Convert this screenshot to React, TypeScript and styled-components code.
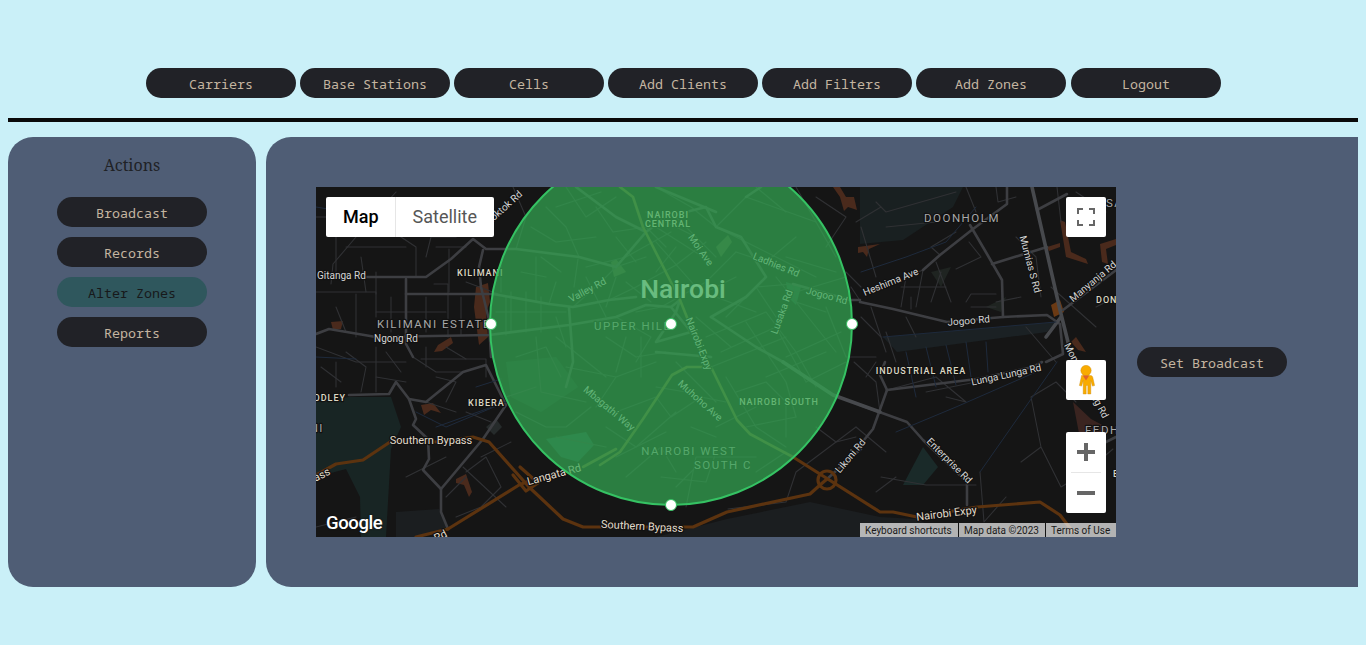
import React from "react";
import styled, { createGlobalStyle } from "styled-components";

const Global = createGlobalStyle`
  html, body { background: #caf0f8; }
  body { margin: 8px; font-family: "Noto Sans Mono", "DejaVu Sans Mono", monospace; }
`;

const Nav = styled.nav`
  display: flex;
  justify-content: center;
  gap: 4px;
  padding: 60px 0 0 1px;
  & > button:last-child { margin-left: 1px; }
`;

const Pill = styled.button<{ $active?: boolean }>`
  width: 150px;
  height: 30px;
  flex: none;
  border: none;
  border-radius: 15px;
  padding: 2px 0 0;
  background: ${(p) => (p.$active ? "#2f575d" : "#212227")};
  color: ${(p) => (p.$active ? "#17191b" : "#c4b5a0")};
  font: 13.33px "Noto Sans Mono", "DejaVu Sans Mono", monospace;
  text-align: center;
`;

const Rule = styled.hr`
  height: 4px;
  margin: 20px 0 15px;
  border: none;
  background: #0a0a0a;
`;

const Panels = styled.main`
  display: flex;
  gap: 10px;
  height: 450px;
`;

const Sidebar = styled.aside`
  width: 248px;
  flex: none;
  display: flex;
  flex-direction: column;
  align-items: center;
  gap: 10px;
  background: #4f5d75;
  border-radius: 25px;
`;

const SideTitle = styled.h2`
  margin: 18px 0 11px;
  height: 21px;
  font: 400 16px/21px "Noto Serif", "DejaVu Serif", serif;
  color: #1f2226;
`;

const Content = styled.section`
  flex: 1;
  display: flex;
  align-items: center;
  gap: 21px;
  padding-left: 50px;
  background: #4f5d75;
  border-radius: 25px 0 0 25px;
`;

const MapFrame = styled.div`
  position: relative;
  width: 800px;
  height: 350px;
  flex: none;
  overflow: hidden;
  background: #151515;
`;

const MapArt = styled.svg`
  display: block;
  width: 800px;
  height: 350px;
`;

const Road = styled.path<{ $c: string; $w: number }>`
  fill: none;
  stroke: ${(p) => p.$c};
  stroke-width: ${(p) => p.$w};
  stroke-linejoin: round;
  stroke-linecap: round;
`;

const Patch = styled.path<{ $c: string }>`
  fill: ${(p) => p.$c};
`;

type Kind = "road" | "major" | "area" | "poi" | "city";

const KIND_CSS: Record<Kind, string> = {
  road: "font-size: 10px; fill: #d4d4d4;",
  major: "font-size: 11px; fill: #e2dccb;",
  area: "font-size: 11.5px; letter-spacing: 1.5px; fill: #a8a8a8;",
  poi: "font-size: 9px; font-weight: 500; letter-spacing: 1px; fill: #dcd8c4;",
  city: "font-size: 26.5px; font-weight: 500; fill: #f0f0f0;",
};

const Label = styled.text<{ $kind: Kind }>`
  font-family: Roboto, "Liberation Sans", sans-serif;
  paint-order: stroke;
  stroke: #111;
  stroke-width: 2.4px;
  stroke-linejoin: round;
  ${(p) => KIND_CSS[p.$kind]}
`;

const Zone = styled.circle`
  fill: #34a853;
  fill-opacity: 0.72;
  stroke: #35c263;
  stroke-width: 2;
`;

const Handle = styled.circle`
  fill: #fff;
  stroke: #35c263;
  stroke-width: 1;
`;

const MapTypes = styled.div`
  position: absolute;
  left: 10px;
  top: 10px;
  display: flex;
  height: 40px;
  background: #fff;
  border-radius: 2px;
  font: 18px/40px Roboto, sans-serif;
`;

const MapType = styled.div<{ $on?: boolean }>`
  padding: ${(p) => (p.$on ? "0 16px 0 17px" : "0 16.5px 0 17px")};
  color: ${(p) => (p.$on ? "#000" : "#565656")};
  font-weight: ${(p) => (p.$on ? 500 : 400)};
  & + & { border-left: 1px solid #e6e6e6; }
`;

const Ctl = styled.div<{ $top: number }>`
  position: absolute;
  right: 10px;
  top: ${(p) => p.$top}px;
  width: 40px;
  display: flex;
  flex-direction: column;
  align-items: center;
  justify-content: center;
  background: #fff;
  border-radius: 2px;
`;

const ZoomCell = styled.div`
  width: 40px;
  height: 40px;
  display: flex;
  align-items: center;
  justify-content: center;
`;

const ZoomSep = styled.div`
  width: 30px;
  height: 1px;
  background: #e6e6e6;
`;

const GoogleMark = styled.div`
  position: absolute;
  left: 10px;
  bottom: 2px;
  font: 500 18.5px/24px Roboto, "Open Sans", sans-serif;
  letter-spacing: -0.4px;
  color: #fff;
  text-shadow: 0 0 2px #111;
`;

const Attribution = styled.div`
  position: absolute;
  right: 0;
  bottom: 0;
  display: flex;
  height: 14px;
  font: 10px/15px Roboto, sans-serif;
  color: #1a1a1a;
`;

const AttrItem = styled.span<{ $w: number }>`
  width: ${(p) => p.$w}px;
  padding-left: 5px;
  box-sizing: border-box;
  background: rgba(255, 255, 255, 0.68);
  & + & { margin-left: 1px; }
`;

const ROADS = {
  minor: [
    "M15 97L17 77L40 50L80 5", "M0 30H20V90", "M0 105H60V130", "M90 107V92M118 97H132V150M40 107V150M60 85V107",
    "M133 62V105M110 70L115 50L140 50M120 60H150M0 160L40 175H90M20 175V200M60 160V205M105 172H170V190",
    "M145 110V148M185 75V105M150 95L190 110V148M195 105V145M210 105V145M225 110V145M180 125H250",
    "M97 170L120 185L147 185M60 190L90 195M110 215L140 225M150 225L175 235",
    "M197 0L210 30L200 62M230 20L250 40L263 70M250 0L270 30L300 10M280 20L297 45L330 40L350 60M262 72L258 100M300 50L320 75",
    "M233 117L240 95M205 85L230 90M220 70V115M257 120L285 95L300 80L330 70M293 113L320 100L360 78L390 55",
    "M340 0L375 20L400 40L430 10M400 40L440 60L500 90M430 10L500 35M420 65L450 75L480 50",
    "M355 45L310 70L270 80M340 55L380 100M360 30L400 70M330 25L380 50M340 40L395 75",
    "M420 65L390 95L345 120L320 125M440 100L477 97L480 115L510 125M460 90L500 140L520 165",
    "M390 150L450 125L480 165L500 200M405 165L460 140L490 195M395 180L470 150M430 135L470 195L480 230",
    "M450 190L510 165M470 170L525 145M490 195L530 175M535 100L545 115M470 70L520 85M480 105L530 90",
    "M410 190L440 240L470 260M420 205L450 195L470 215V250M430 240L480 230M470 265L440 285M440 270H380L370 320",
    "M300 225L340 210L355 230L385 210L410 215M290 240L320 260L360 225M280 220L300 190L340 175",
    "M240 150L290 190M220 150L225 205L270 215M250 180L300 190M290 150L320 170L350 165M325 150V190M310 150L300 185",
    "M200 225L230 240L250 240L275 220M220 200L190 210M240 250L290 260M300 270L350 245M345 290L390 295L400 265M360 300L380 280",
    "M510 120L530 170L560 170M538 175L560 195L564 225M570 145L580 175M555 120L570 165",
    "M607 83L590 90L585 120M620 75L635 115M607 83L600 120M585 100H630M595 110V122M615 115L625 85M624 68L615 60L640 45M653 55L665 70L640 82",
    "M650 115L655 107H680M655 120H680M700 50L720 70L725 110M680 115L705 110",
    "M560 15L570 25L640 5M570 40L620 35M650 0L660 25M680 0L682 15L700 10",
    "M741 0L745 35M735 100L780 140M710 140L740 175M780 120L800 110M760 5L790 25",
    "M571 203L620 190L650 215L630 210M610 205L660 195M550 190L560 175",
    "M664 285L668 335L690 310M705 275L725 260L745 300M725 260L715 210L740 195L760 215M745 300L770 285L797 262",
    "M565 290L610 298L660 298M560 305L580 290M500 240L520 255L540 250M540 240L570 265",
    "M412 322L470 315L480 285L500 270L540 240",
    "M147 280L190 320M90 290L130 270M165 270L195 255M150 285L170 270L185 300L165 320L140 330",
    "M0 340L40 330M130 310L150 290",
    "M30 60H90M45 70L50 105M70 40L100 60V90M100 30L130 45M110 110V145M75 110V145M60 125H130M20 120L30 145",
    "M30 165L50 180L45 205M70 165L85 185M110 160V180M130 160L150 172M5 180L25 195M120 190L140 195L130 215",
    "M240 20L285 5M215 40L240 55L280 50M225 70L245 85M270 90L290 130M240 130L250 160M200 170L230 160L245 190",
    "M300 130L335 150L320 175M290 120L300 90M310 95L335 115M340 85L360 60M380 110L420 90M400 110L440 125",
    "M360 175L400 215M340 200L370 205M310 290L345 260L360 285M400 240L440 220M375 240L400 250",
    "M410 130L440 100L460 130M380 130L415 160M440 0L470 25M500 10L530 30L510 60M480 0L520 70",
    "M540 35L565 20M545 40L560 90M530 85L545 100M545 130L565 150M590 130L600 150",
  ],
  main: [
    "M50 90H110L135 72L157 52L170 62H200L263 70L300 80",
    "M167 63L163 80L165 100L173 133L175 170",
    "M0 147L13 142L60 150L173 148L253 138L300 130L330 118L355 120L364 113",
    "M90 92V157L97 170", "M90 107H177L233 117L257 120L293 113L320 110",
    "M253 120L257 175L250 200",
    "M33 208L73 207L80 195L93 212L110 215L147 185L170 178L187 212L190 218L167 252L125 302V325L132 342",
    "M93 212L100 232L97 238L112 252L113 272L107 283L125 302",
    "M300 80L330 45L350 30L390 20L400 40L425 50L450 90L430 110L395 130",
    "M260 0L300 30L330 45M340 0L400 25M430 10L445 0",
    "M364 113L360 125M355 120L375 145L340 155L360 125M395 130L440 160L467 175",
    "M477 97L534 113",
    "M340 165L395 170",
    "M544 115L577 122L631 135L687 130L731 128L744 137L747 167L730 175",
    "M534 113H544",
    "M607 83L624 68L657 42L691 17V0",
    "M654 38L671 67L686 93L687 130", "M676 77L731 60",
    "M747 123L804 80", "M721 23L751 7",
    "M571 203L661 192", "M661 192L717 180L726 175",
    "M571 203L564 188L569 175", "M571 203L557 242L544 258",
    "M544 218L591 235L607 253L651 295V318",
    "M511 292L530 275L545 262",
    "M760 270L800 250",
  ],
  wide: [
    "M716 0L744 123L757 175", "M467 175L517 208L564 225", "M730 150L745 130",
  ],
  olive: [
    "M304 0L317 10L327 40L364 113L387 170L396 182L421 233L434 247L477 270",
    "M284 278L304 265L327 232L356 188L371 180L394 180",
    "M267 280L300 262",
  ],
  brown: [
    "M0 288L20 277L47 273L77 253L123 255L157 250L173 255L197 282L213 300L247 332L267 340L300 340L377 340L411 325L494 307L504 298L511 292",
    "M132 342L203 298L213 294", "M477 270L564 325L577 325L601 330L661 320L724 315L744 328L757 345",
    "M197 288L210 304L222 296L204 280",
    "M502 293A9 9 0 1 0 520 293A9 9 0 1 0 502 293",
    "M100 350L132 342",
  ],
  blue: [
    "M664 285L741 175", "M0 170L40 172", "M160 200L185 192", "M120 240L190 215", "M580 245L640 220L720 185",
    "M567 150L740 135", "M590 165L600 210M610 160L620 200M630 158L640 198M650 155L655 190M670 155L672 185",
    "M100 225L130 240L190 215", "M0 20L30 25", "M545 85L590 70L630 55L660 20",
  ],
};

const LABELS: { t: string; x: number; y: number; k: Kind; r?: number; a?: string }[] = [
  { t: "Gitanga Rd", x: 1, y: 92, k: "road" },
  { t: "Oloitoktok Rd", x: 207, y: 8, k: "road", r: -42, a: "end" },
  { t: "KILIMANI", x: 141, y: 89, k: "poi" },
  { t: "KILIMANI ESTATE", x: 61, y: 141, k: "area" },
  { t: "Ngong Rd", x: 58, y: 155, k: "road" },
  { t: "Valley Rd", x: 273, y: 106, k: "road", r: -28, a: "middle" },
  { t: "UPPER HILL", x: 278, y: 143, k: "area" },
  { t: "NAIROBI", x: 352, y: 31, k: "poi", a: "middle" },
  { t: "CENTRAL", x: 352, y: 40, k: "poi", a: "middle" },
  { t: "Moi Ave", x: 382, y: 65, k: "road", r: 55, a: "middle" },
  { t: "Ladhies Rd", x: 459, y: 81, k: "road", r: 22, a: "middle" },
  { t: "Jogoo Rd", x: 510, y: 112, k: "road", r: 15, a: "middle" },
  { t: "Lusaka Rd", x: 469, y: 126, k: "road", r: -70, a: "middle" },
  { t: "Nairobi", x: 367, y: 111, k: "city", a: "middle" },
  { t: "Nairobi Expy", x: 380, y: 158, k: "road", r: 68, a: "middle" },
  { t: "Muhoho Ave", x: 382, y: 216, k: "road", r: 42, a: "middle" },
  { t: "Mbagathi Way", x: 291, y: 224, k: "road", r: 40, a: "middle" },
  { t: "NAIROBI SOUTH", x: 463, y: 218, k: "poi", a: "middle" },
  { t: "NAIROBI WEST", x: 373, y: 268, k: "area", a: "middle" },
  { t: "SOUTH C", x: 407, y: 282, k: "area", a: "middle" },
  { t: "Southern Bypass", x: 326, y: 343, k: "major", r: 3, a: "middle" },
  { t: "Southern Bypass", x: 115, y: 257, k: "major", r: 0, a: "middle" },
  { t: "Bypass", x: 15, y: 287, k: "major", r: -27, a: "end" },
  { t: "Langata Rd", x: 239, y: 291, k: "major", r: -15, a: "middle" },
  { t: "Langata Rd", x: 132, y: 349, k: "major", r: -28, a: "end" },
  { t: "KIBERA", x: 152, y: 219, k: "poi" },
  { t: "WOODLEY", x: 30, y: 214, k: "poi", a: "end" },
  { t: "KILIMANI", x: 8, y: 245, k: "area", a: "end" },
  { t: "DOONHOLM", x: 646, y: 35, k: "area", a: "middle" },
  { t: "Mumias S Rd", x: 711, y: 78, k: "road", r: 75, a: "middle" },
  { t: "Heshima Ave", x: 576, y: 98, k: "road", r: -22, a: "middle" },
  { t: "Jogoo Rd", x: 653, y: 137, k: "road", r: -5, a: "middle" },
  { t: "Manyanja Rd", x: 779, y: 97, k: "road", r: -40, a: "middle" },
  { t: "DONHOLM", x: 780, y: 116, k: "poi" },
  { t: "SAIKA", x: 790, y: 20, k: "area" },
  { t: "INDUSTRIAL AREA", x: 605, y: 187, k: "poi", a: "middle" },
  { t: "Lunga Lunga Rd", x: 691, y: 191, k: "road", r: -12, a: "middle" },
  { t: "Likoni Rd", x: 537, y: 271, k: "road", r: -50, a: "middle" },
  { t: "Enterprise Rd", x: 631, y: 276, k: "road", r: 45, a: "middle" },
  { t: "Nairobi Expy", x: 631, y: 330, k: "major", r: -7, a: "middle" },
  { t: "Mombasa Lang Rd", x: 787, y: 232, k: "road", r: 62, a: "end" },
  { t: "FEDHA", x: 769, y: 247, k: "area" },
  { t: "EMBAKASI", x: 797, y: 290, k: "poi" },
];

const PATCHES: { c: string; d: string }[] = [
  { c: "#182524", d: "M0 215L33 210L75 210L85 240L75 262L70 350H45L44 310L30 282L0 290Z" },
  { c: "#192021", d: "M544 0H647L637 20L587 53L544 57Z" },
  { c: "#1b2124", d: "M567 150L740 135L731 145L581 165Z" },
  { c: "#1b1e20", d: "M411 332L494 315L564 330L600 332L640 350H340Z" },
  { c: "#1b1e20", d: "M80 325L123 322L132 342L105 350H80Z" },
  { c: "#1a2a29", d: "M607 260L622 280L607 298L587 298Z" },
  { c: "#4a2a1c", d: "M517 0H524L530 10H538L541 23L532 20L528 24L524 10Z" },
  { c: "#4a2a1c", d: "M542 60L564 57L553 62L551 70L547 65L542 66Z" },
  { c: "#4a2a1c", d: "M160 100L172 96L174 115L170 125L172 150L163 158L158 120Z" },
  { c: "#4a2a1c", d: "M122 158L135 150L137 156L126 164L118 165Z" },
  { c: "#4a2a1c", d: "M15 135L27 134L25 142L17 143Z" },
  { c: "#4a2a1c", d: "M105 218L117 216L125 226L115 223L108 228Z" },
  { c: "#4a2a1c", d: "M140 292L150 287L156 305L153 310L148 298L140 296Z" },
  { c: "#3a2420", d: "M757 215L775 232L790 240L790 295L775 298L766 262Z" },
  { c: "#4a2a1c", d: "M744 33L750 70L772 77L770 72L755 65L749 35Z" },
  { c: "#4a2a1c", d: "M731 60L744 56V60L733 64Z" },
  { c: "#4a2a1c", d: "M784 57L800 52V58L790 62L792 77L786 75Z" },
  { c: "#6b3a14", d: "M735 118L744 113L748 125L738 130Z" },
  { c: "#4a2a1c", d: "M760 150L770 165L762 163L755 155Z" },
  { c: "#1f3a3a", d: "M230 252L270 245L278 258L262 275L245 270Z" },
  { c: "#262b2b", d: "M170 240L180 232L186 240L178 248Z" },
  { c: "#3a3c2c", d: "M295 75L300 72L310 85L298 90Z" },
  { c: "#3a3c2c", d: "M400 60L412 48L416 55L405 70Z" },
  { c: "#1c2623", d: "M190 175L240 170L262 200L225 225L195 210Z" },
  { c: "#203a33", d: "M470 95L485 100L480 118L472 110Z" },
  { c: "#1f2421", d: "M615 85L635 80L625 100Z" },
  { c: "#1f2421", d: "M670 120L690 110L685 125Z" },
];

const ROAD_STYLE: Record<keyof typeof ROADS, [string, number]> = {
  minor: ["#303134", 1.1],
  main: ["#3d3e42", 2.6],
  wide: ["#47494d", 3.6],
  olive: ["#5d5528", 2.6],
  brown: ["#5c330f", 3.2],
  blue: ["#1e2a3c", 1],
};

const TerrainMap = () => (
  <MapArt viewBox="0 0 800 350">
    {PATCHES.map((p, i) => (
      <Patch key={i} $c={p.c} d={p.d} />
    ))}
    {(Object.keys(ROADS) as (keyof typeof ROADS)[]).map((k) =>
      ROADS[k].map((d, i) => <Road key={k + i} d={d} $c={ROAD_STYLE[k][0]} $w={ROAD_STYLE[k][1]} />),
    )}
    {LABELS.map((l, i) => (
      <Label
        key={i}
        $kind={l.k}
        x={l.x}
        y={l.y}
        textAnchor={l.a ?? "start"}
        transform={l.r ? `rotate(${l.r} ${l.x} ${l.y})` : undefined}
      >
        {l.t}
      </Label>
    ))}
    <Zone cx={355} cy={137} r={181} />
    <Handle cx={355} cy={137} r={5.5} />
    <Handle cx={175} cy={137} r={5.5} />
    <Handle cx={536} cy={137} r={5.5} />
    <Handle cx={355} cy={318} r={5.5} />
  </MapArt>
);

const navItems = ["Carriers", "Base Stations", "Cells", "Add Clients", "Add Filters", "Add Zones", "Logout"];
const sideItems = ["Broadcast", "Records", "Alter Zones", "Reports"];

export default function App() {
  return (
    <>
      <Global />
      <Nav>
        {navItems.map((n) => (
          <Pill key={n}>{n}</Pill>
        ))}
      </Nav>
      <Rule />
      <Panels>
        <Sidebar>
          <SideTitle>Actions</SideTitle>
          {sideItems.map((s) => (
            <Pill key={s} $active={s === "Alter Zones"}>
              {s}
            </Pill>
          ))}
        </Sidebar>
        <Content>
          <MapFrame>
            <TerrainMap />
            <MapTypes>
              <MapType $on>Map</MapType>
              <MapType>Satellite</MapType>
            </MapTypes>
            <Ctl $top={10}>
              <ZoomCell>
                <svg width="18" height="18" viewBox="0 0 18 18" fill="#666">
                  <path d="M0 0h6v2H2v4H0zM12 0h6v6h-2V2h-4zM0 12h2v4h4v2H0zM16 12h2v6h-6v-2h4z" />
                </svg>
              </ZoomCell>
            </Ctl>
            <Ctl $top={173}>
              <ZoomCell>
                <svg width="18" height="30" viewBox="0 0 18 30">
                  <circle cx="9" cy="5.500" r="5.200" fill="#f9ab00" stroke="#c98a10" strokeWidth="0.400" />
                  <path d="M4.500 10.500h9c1.300 0 2 .8 2.300 2l1.800 8-2.200.6-1.600-5.500V29h-3v-8.500h-1.600V29h-3V15.600L4.600 21.100l-2.200-.6 1.800-8c.2-1 .3-2 .3-2z" fill="#f9ab00" stroke="#c98a10" strokeWidth="0.400" />
                  <path d="M5.800 10.500h6.400L9 15.500z" fill="#e0622a" />
                </svg>
              </ZoomCell>
            </Ctl>
            <Ctl $top={245}>
              <ZoomCell>
                <svg width="18" height="18" viewBox="0 0 18 18" fill="#666">
                  <path d="M7 0h4v7h7v4h-7v7H7v-7H0V7h7z" />
                </svg>
              </ZoomCell>
              <ZoomSep />
              <ZoomCell>
                <svg width="18" height="18" viewBox="0 0 18 18" fill="#666">
                  <path d="M0 7h18v4H0z" />
                </svg>
              </ZoomCell>
            </Ctl>
            <GoogleMark>Google</GoogleMark>
            <Attribution>
              <AttrItem $w={98}>Keyboard shortcuts</AttrItem>
              <AttrItem $w={86}>Map data ©2023</AttrItem>
              <AttrItem $w={70}>Terms of Use</AttrItem>
            </Attribution>
          </MapFrame>
          <Pill>Set Broadcast</Pill>
        </Content>
      </Panels>
    </>
  );
}
